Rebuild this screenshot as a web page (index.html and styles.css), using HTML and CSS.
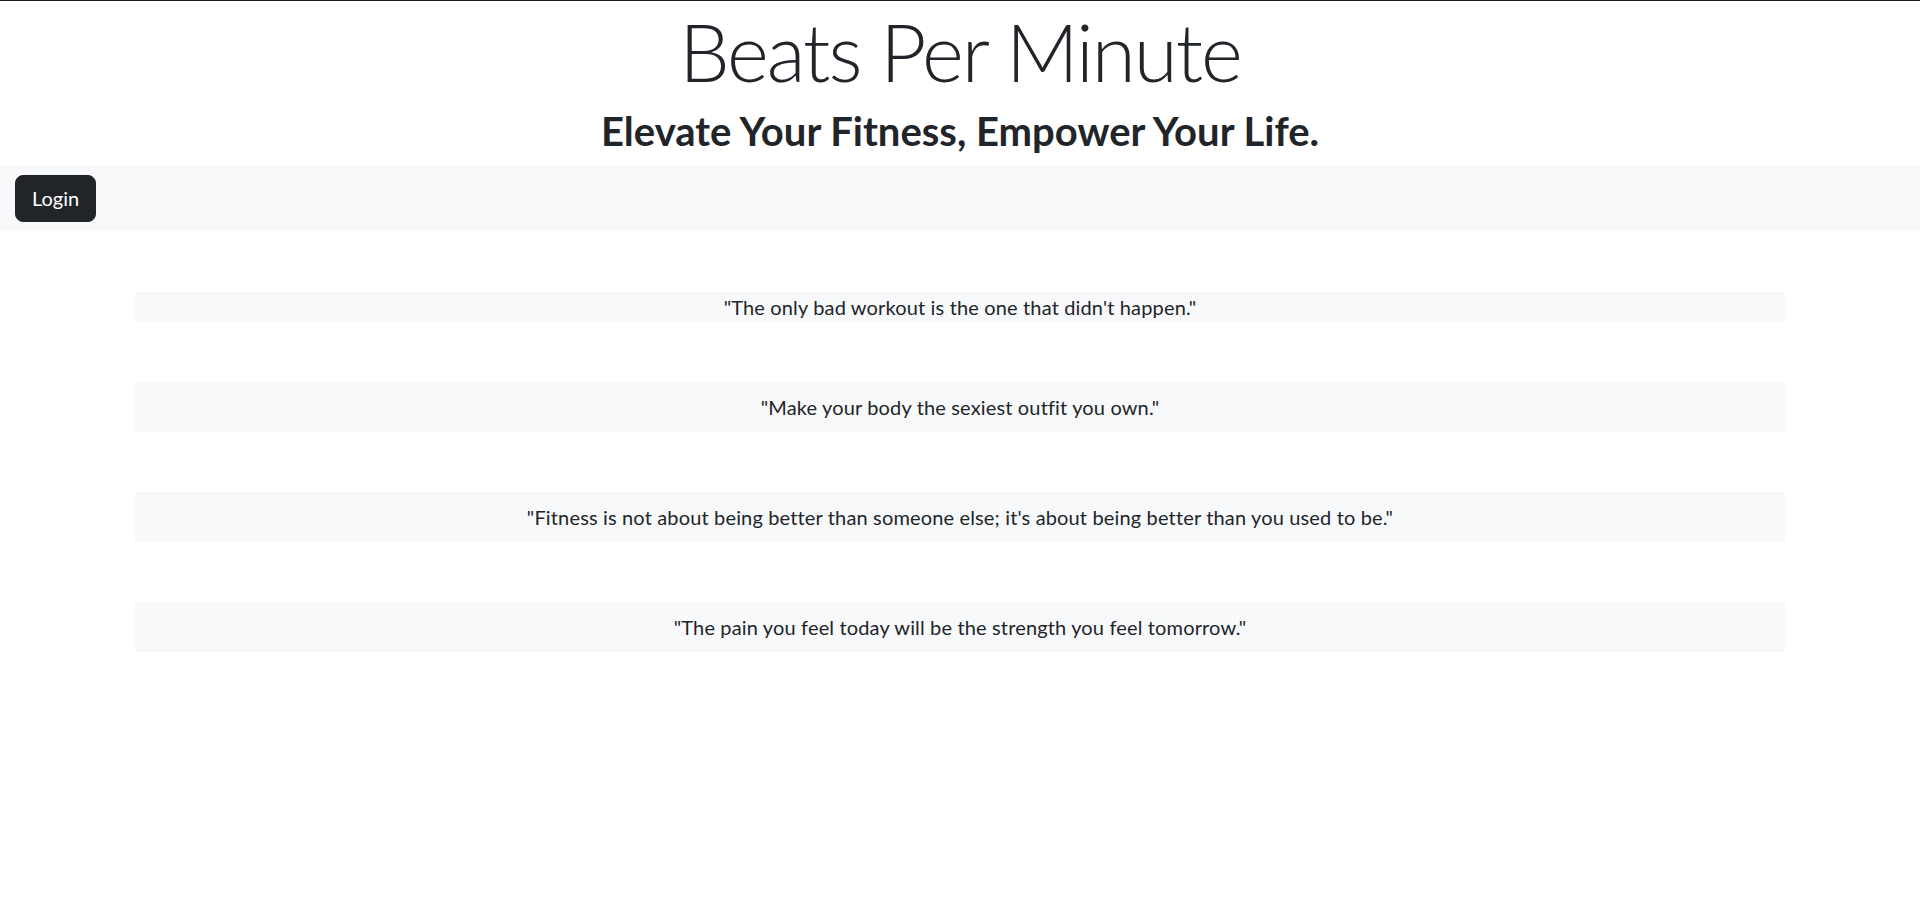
FILE: index.html
```html
<!DOCTYPE html>
<html lang="en">
<head>
<meta charset="utf-8">
<title>Beats Per Minute</title>
<link rel="stylesheet" href="styles.css">
</head>
<body>
<header class="masthead">
  <h1 class="title">Beats Per Minute</h1>
  <h2 class="tagline">Elevate Your Fitness, Empower Your Life.</h2>
</header>
<nav class="navbar">
  <button class="btn-login" type="button">Login</button>
</nav>
<main class="quotes">
  <p class="quote quote-first">"The only bad workout is the one that didn't happen."</p>
  <p class="quote">"Make your body the sexiest outfit you own."</p>
  <p class="quote">"Fitness is not about being better than someone else; it's about being better than you used to be."</p>
  <p class="quote">"The pain you feel today will be the strength you feel tomorrow."</p>
</main>
</body>
</html>
```
FILE: styles.css
```css
* { box-sizing: border-box; }
html, body { margin: 0; padding: 0; }
body {
  font-family: Lato, "Open Sans", sans-serif;
  color: #212529;
  background: #fff;
  border-top: 1px solid #1b1b1b;
}
.masthead { text-align: center; }
.title {
  margin: 2px 0 8px;
  font-size: 80px;
  font-weight: 300;
  letter-spacing: -2px;
  line-height: 96px;
}
.tagline {
  margin: 0 0 10px;
  font-size: 40px;
  font-weight: 700;
  line-height: 48px;
}
.navbar {
  display: flex;
  align-items: center;
  background: #f8f9fa;
  padding: 10px 15px 9px;
}
.btn-login {
  font-family: inherit;
  font-size: 20px;
  line-height: 29px;
  color: #fff;
  background: #212529;
  border: 1px solid #212529;
  border-radius: 8px;
  padding: 8px 16px;
}
.quotes {
  margin: 61px 135px 0;
  display: flex;
  flex-direction: column;
  gap: 60px;
}
.quote {
  margin: 0;
  background: #f8f9fa;
  text-align: center;
  font-size: 20px;
  letter-spacing: 0.15px;
  line-height: 30px;
  padding: 10px 0;
}
.quote-first { padding: 0; }
```
